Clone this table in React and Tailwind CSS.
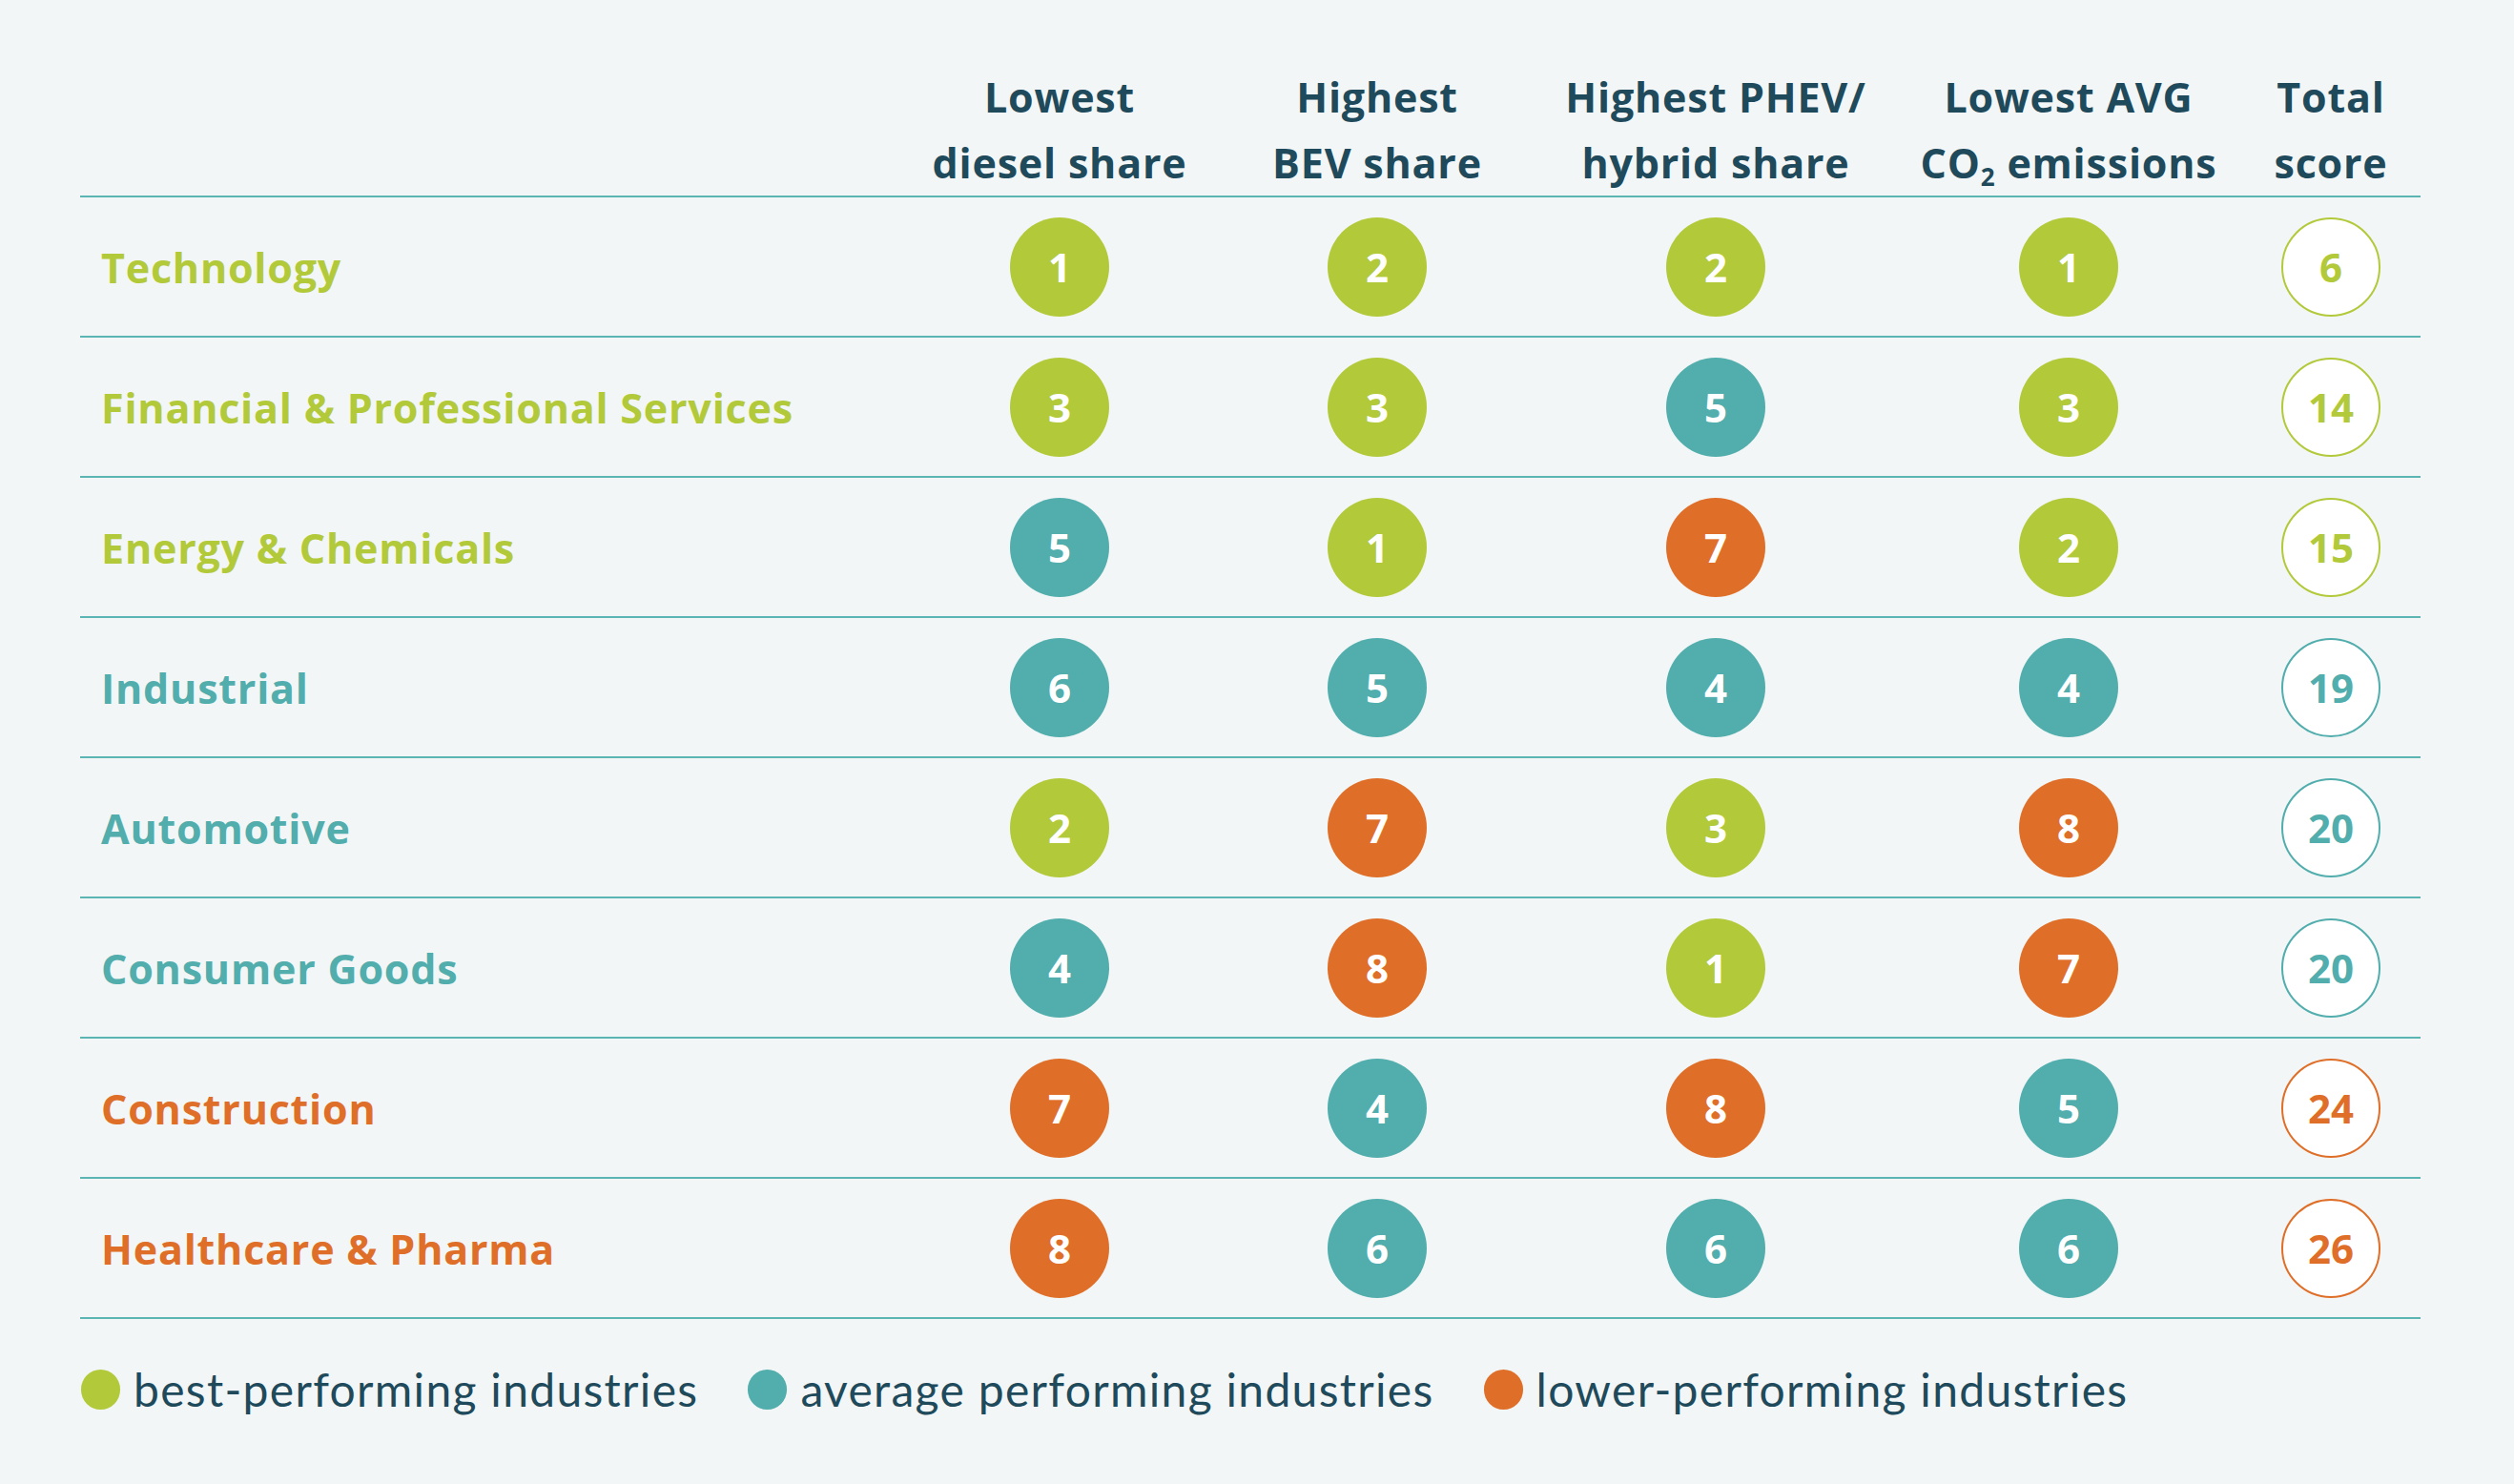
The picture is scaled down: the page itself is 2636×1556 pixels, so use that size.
import React from 'react';

const colors = {
    best: '#b2c93a',
    avg: '#52adad',
    low: '#df6f28',
};

const rows = [
    { name: 'Technology', tier: 'best', ranks: [1, 2, 2, 1], total: 6 },
    { name: 'Financial & Professional Services', tier: 'best', ranks: [3, 3, 5, 3], total: 14 },
    { name: 'Energy & Chemicals', tier: 'best', ranks: [5, 1, 7, 2], total: 15 },
    { name: 'Industrial', tier: 'avg', ranks: [6, 5, 4, 4], total: 19 },
    { name: 'Automotive', tier: 'avg', ranks: [2, 7, 3, 8], total: 20 },
    { name: 'Consumer Goods', tier: 'avg', ranks: [4, 8, 1, 7], total: 20 },
    { name: 'Construction', tier: 'low', ranks: [7, 4, 8, 5], total: 24 },
    { name: 'Healthcare & Pharma', tier: 'low', ranks: [8, 6, 6, 6], total: 26 },
];

// rank 1-3 green, 4-6 teal, 7-8 orange
const rankTier = (n) => (n <= 3 ? 'best' : n <= 6 ? 'avg' : 'low');

const gridCols = 'grid grid-cols-[860px_334px_332px_378px_362px_188px]';
const boldFont = "font-['Open_Sans','Liberation_Sans',sans-serif] font-bold";

const Circle = ({ value }) => (
    <div
        className={`w-[104px] h-[104px] rounded-full flex items-center justify-center text-white text-[42px] leading-none ${boldFont}`}
        style={{ backgroundColor: colors[rankTier(value)] }}
    >
        {value}
    </div>
);

const TotalCircle = ({ value, tier }) => (
    <div
        className={`w-[104px] h-[104px] rounded-full bg-white border-2 flex items-center justify-center text-[42px] leading-none ${boldFont}`}
        style={{ borderColor: colors[tier], color: colors[tier] }}
    >
        {value}
    </div>
);

const LegendItem = ({ color, label }) => (
    <div className="flex items-center gap-[14px]">
        <span className="w-[41px] h-[42px] rounded-full" style={{ backgroundColor: color }} />
        <span className="text-[48px] text-[#1f4a5b] leading-none tracking-[1.3px]">{label}</span>
    </div>
);

const App = () => {
    return (
        <div className="w-full min-h-screen bg-[#f2f6f6] font-['Lato','Liberation_Sans',sans-serif] pt-[67px]">
            <div className="ml-[84px] w-[2454px]">
                {/* Header */}
                <div className={`${gridCols} ${boldFont} border-b-2 border-[#5ab5b3] text-[#1f4a5b] text-[43px] leading-[69px] text-center tracking-[0.8px]`}>
                    <div />
                    <div>Lowest<br />diesel share</div>
                    <div>Highest<br />BEV share</div>
                    <div>Highest PHEV/<br />hybrid share</div>
                    <div>Lowest AVG<br />CO<sub className="text-[26px] relative top-[8px]">2</sub> emissions</div>
                    <div>Total<br />score</div>
                </div>

                {/* Rows */}
                {rows.map((row) => (
                    <div key={row.name} className={`${gridCols} h-[147px] border-b-2 border-[#5ab5b3] items-center`}>
                        <div className={`pl-[22px] pt-[3px] text-[43px] tracking-[0.8px] ${boldFont}`} style={{ color: colors[row.tier] }}>
                            {row.name}
                        </div>
                        {row.ranks.map((r, i) => (
                            <div key={i} className="flex justify-center">
                                <Circle value={r} />
                            </div>
                        ))}
                        <div className="flex justify-center">
                            <TotalCircle value={row.total} tier={row.tier} />
                        </div>
                    </div>
                ))}

                {/* Legend */}
                <div className="flex items-center gap-[52px] mt-[50px] pl-[1px]">
                    <LegendItem color={colors.best} label="best-performing industries" />
                    <LegendItem color={colors.avg} label="average performing industries" />
                    <LegendItem color={colors.low} label="lower-performing industries" />
                </div>
            </div>
        </div>
    );
};

export default App;
